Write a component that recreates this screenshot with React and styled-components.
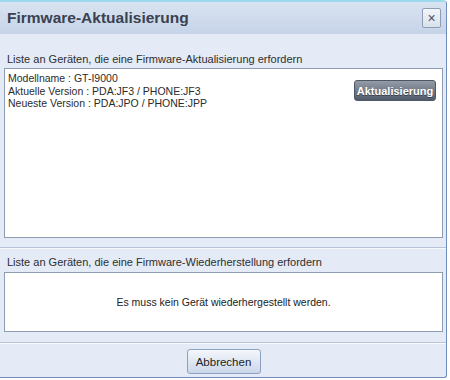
import React from 'react'
import styled, { createGlobalStyle } from 'styled-components'

const GlobalStyle = createGlobalStyle`
  html, body {
    margin: 0;
    padding: 0;
    background: #ffffff;
    font-family: "Liberation Sans", Arial, sans-serif;
  }
`

const Dialog = styled.div`
  width: 446px;
  height: 375px;
  border-top: 2px solid #9cd8ee;
  border-right: 1px solid #6f8dbd;
  border-bottom: 1px solid #6f8dbd;
  border-bottom-right-radius: 3px;
  border-top-right-radius: 4px;
  background: #e4ebf6;
  display: flex;
  flex-direction: column;
  color: #2b2b2b;
`

const TitleBar = styled.div`
  height: 32px;
  display: flex;
  align-items: center;
  justify-content: space-between;
  padding: 0 5px 0 7px;
  background: linear-gradient(#d9e3f1, #c6d4e8);
  border-top-right-radius: 3px;
`

const Title = styled.h1`
  margin: 0;
  font-size: 15.5px;
  font-weight: bold;
  color: #3a4150;
`

const CloseButton = styled.button`
  width: 19px;
  height: 20px;
  padding: 0;
  border: 1px solid #8d9db5;
  border-radius: 2px;
  background: linear-gradient(#f3f6fa, #d9e1ec);
  color: #4a5468;
  font-family: "Liberation Sans", Arial, sans-serif;
  font-size: 14px;
  line-height: 17px;
  text-align: center;
`

const Body = styled.div`
  flex: 1;
  display: flex;
  flex-direction: column;
  padding: 0 3px 0 4px;
`

const Section = styled.section`
  padding-top: ${p => p.$top}px;
`

const Label = styled.div`
  font-size: 11px;
  line-height: 13px;
  padding-left: 3px;
  margin-bottom: ${p => p.$gap}px;
  color: #2e2e2e;
`

const Box = styled.div`
  height: ${p => p.$height}px;
  box-sizing: border-box;
  background: #ffffff;
  border: 1px solid #8e9cb2;
  display: flex;
  align-items: ${p => (p.$center ? 'center' : 'flex-start')};
  justify-content: ${p => (p.$center ? 'center' : 'space-between')};
  padding: ${p => (p.$center ? '0' : '3px 6px 0 3px')};
`

const InfoLines = styled.div`
  font-size: 10.5px;
  line-height: 12.5px;
  color: #2b2b2b;
`

const Message = styled.div`
  font-size: 10.5px;
  color: #222;
`

const UpdateButton = styled.button`
  margin-top: 8px;
  width: 82px;
  height: 21px;
  padding: 0;
  border: 1px solid #4f5666;
  border-radius: 3px;
  background: linear-gradient(#959ca8, #515a6a);
  color: #ffffff;
  font-family: "Liberation Sans", Arial, sans-serif;
  font-size: 11px;
  font-weight: bold;
  text-shadow: 0 1px 0 #3a404c;
`

const Separator = styled.div`
  margin-top: ${p => p.$top}px;
  margin-left: -4px;
  margin-right: -3px;
  height: 1px;
  background: #b8c5d8;
  border-bottom: 1px solid #f7f9fc;
`

const Footer = styled.div`
  flex: 1;
  display: flex;
  justify-content: center;
  padding-top: 5px;
`

const CancelButton = styled.button`
  width: 74px;
  height: 25px;
  padding: 0;
  border: 1px solid #8ea1c0;
  border-radius: 3px;
  background: linear-gradient(#f4f7fb, #cad7ea);
  color: #222;
  font-family: "Liberation Sans", Arial, sans-serif;
  font-size: 11.5px;
`

export default function App() {
  return (
    <>
      <GlobalStyle />
      <Dialog>
        <TitleBar>
          <Title>Firmware-Aktualisierung</Title>
          <CloseButton>×</CloseButton>
        </TitleBar>
        <Body>
          <Section $top={19}>
            <Label $gap={2}>Liste an Geräten, die eine Firmware-Aktualisierung erfordern</Label>
            <Box $height={170}>
              <InfoLines>
                Modellname : GT-I9000<br />
                Aktuelle Version : PDA:JF3 / PHONE:JF3<br />
                Neueste Version : PDA:JPO / PHONE:JPP
              </InfoLines>
              <UpdateButton>Aktualisierung</UpdateButton>
            </Box>
          </Section>
          <Separator $top={9} />
          <Section $top={7}>
            <Label $gap={3}>Liste an Geräten, die eine Firmware-Wiederherstellung erfordern</Label>
            <Box $height={60} $center>
              <Message>Es muss kein Gerät wiederhergestellt werden.</Message>
            </Box>
          </Section>
          <Separator $top={10} />
          <Footer>
            <CancelButton>Abbrechen</CancelButton>
          </Footer>
        </Body>
      </Dialog>
    </>
  )
}
